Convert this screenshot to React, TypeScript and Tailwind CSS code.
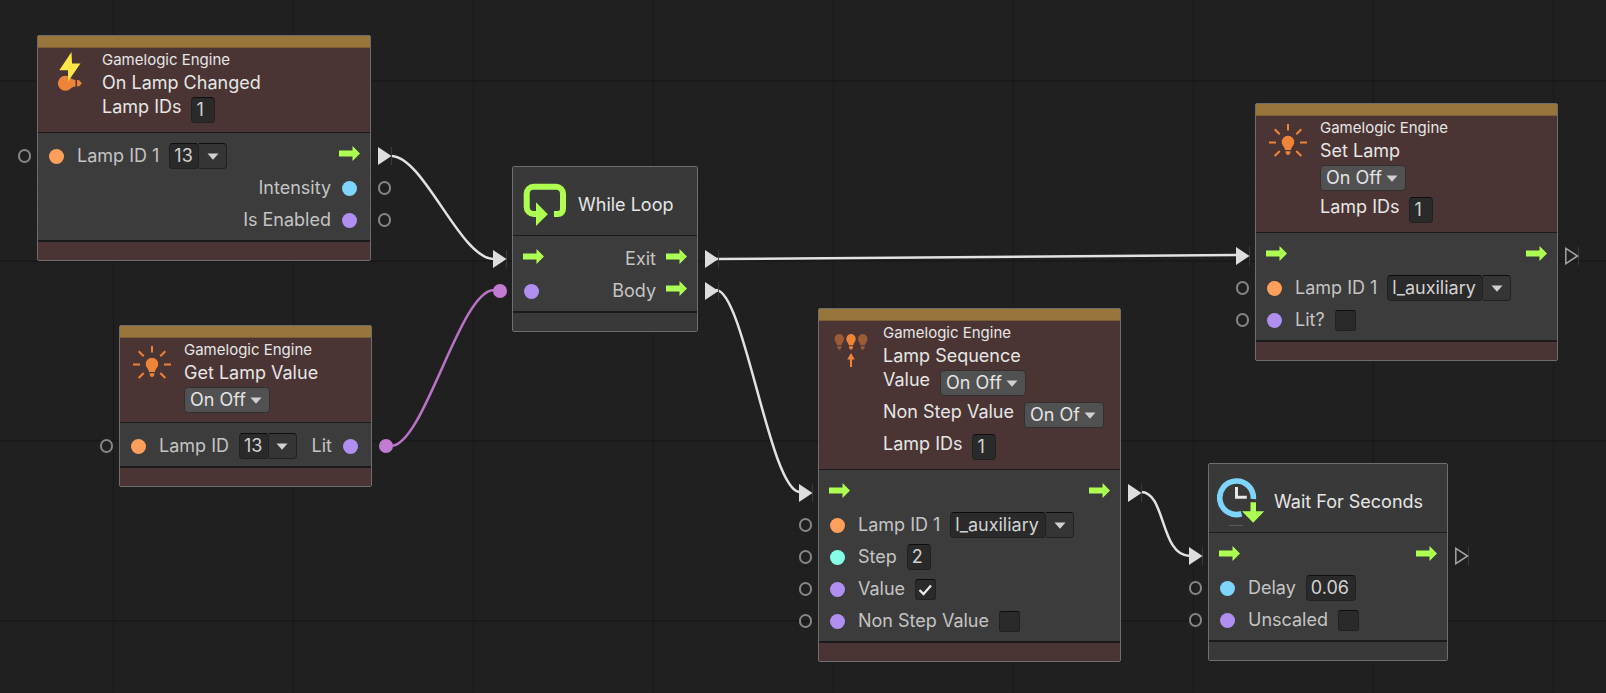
import type { ReactNode } from "react";

type PortKind = "flow" | "flowEmpty" | "empty" | "linked";
type Tone = "orange" | "blue" | "purple" | "teal";

const toneClass: Record<Tone, string> = {
  orange: "bg-[#ff9f5b]",
  blue: "bg-[#7fd4fc]",
  purple: "bg-[#b08ff0]",
  teal: "bg-[#84ffe6]",
};

function Port({ kind, side }: { kind: PortKind; side: "in" | "out" }) {
  const place = side === "in" ? "-left-5" : "-right-[22px]";
  return (
    <span className={`absolute top-0 flex h-full w-3.5 items-center ${place}`}>
      {kind === "flow" && (
        <svg width="14" height="18" viewBox="0 0 14 18">
          <path d="M13.5 0v18" stroke="#3a3a3a" />
          <path d="M0 0 13.5 9 0 18z" fill="#dedede" />
        </svg>
      )}
      {kind === "flowEmpty" && (
        <svg width="14" height="18" viewBox="0 0 14 18">
          <path d="M13.5 0v18" stroke="#3a3a3a" />
          <path d="M.8 1.300 12.500 9 .8 16.700z" fill="none" stroke="#a4a4a4" strokeWidth="1.500" />
        </svg>
      )}
      {kind === "empty" && <span className="h-3.5 w-[13px] rounded-full border-2 border-[#868686]" />}
      {kind === "linked" && <span className="size-3.5 rounded-full bg-[#c17bd0]" />}
    </span>
  );
}

function Arrow() {
  return (
    <svg className="mb-1.5" width="21" height="15" viewBox="0 0 21 15">
      <path d="M0 4.5h13.5V0L21 7.5 13.5 15v-4.5H0z" fill="#adff52" />
    </svg>
  );
}

function Dot({ tone, side = "in" }: { tone: Tone; side?: "in" | "out" }) {
  return (
    <span className={`flex w-[19px] ${side === "in" ? "justify-start pl-px" : "justify-end pr-[3px]"}`}>
      <span className={`size-[15px] rounded-full ${toneClass[tone]}`} />
    </span>
  );
}

function Caret() {
  return (
    <svg width="12" height="7" viewBox="0 0 12 7" className="pointer-events-none">
      <path d="M.5.5h11L6 6.7z" fill="#d0d0d0" />
    </svg>
  );
}

const fieldBox =
  "h-[26px] rounded border border-[#212121] border-t-[#0d0d0d] bg-[#2a2a2a] pl-1 text-lg text-[#d2d2d2] outline-none";

function Field({ label, value, width = "w-6" }: { label: string; value: string; width?: string }) {
  return <input aria-label={label} defaultValue={value} className={`${fieldBox} ${width}`} />;
}

function Combo({ label, value, width }: { label: string; value: string; width: string }) {
  return (
    <span className="flex">
      <input aria-label={label} defaultValue={value} className={`${fieldBox} ${width}`} />
      <button
        type="button"
        aria-label={`Choose ${label}`}
        className="flex h-[26px] w-7 items-center justify-center rounded-r border border-l-0 border-[#212121] border-t-[#0d0d0d] bg-[#353535]"
      >
        <Caret />
      </button>
    </span>
  );
}

function Choice({ label, value, width = "w-[86px]" }: { label: string; value: string; width?: string }) {
  return (
    <span className={`relative flex h-[26px] items-center ${width}`}>
      <select
        aria-label={label}
        className="h-full w-full appearance-none rounded border border-[#303030] bg-[#515151] pr-[22px] pl-[5px] text-lg leading-6 text-[#e4e4e4] outline-none"
      >
        <option>{value}</option>
      </select>
      <span className="pointer-events-none absolute right-2 flex">
        <Caret />
      </span>
    </span>
  );
}

function Check({ label, checked = false }: { label: string; checked?: boolean }) {
  return (
    <span className="relative flex size-[21px]">
      <input
        type="checkbox"
        aria-label={label}
        defaultChecked={checked}
        className="peer size-full appearance-none rounded-[3px] border border-[#212121] border-t-[#0d0d0d] bg-[#2a2a2a]"
      />
      <svg
        className="pointer-events-none absolute inset-0 hidden peer-checked:block"
        width="21"
        height="21"
        viewBox="0 0 21 21"
      >
        <path d="m4.5 11 4 4 7.5-8.5" fill="none" stroke="#e8e8e8" strokeWidth="2.3" />
      </svg>
    </span>
  );
}

function Row({
  inPort,
  outPort,
  left,
  right,
}: {
  inPort?: PortKind;
  outPort?: PortKind;
  left?: ReactNode;
  right?: ReactNode;
}) {
  return (
    <div className="relative flex h-8 items-center justify-between px-2.5 whitespace-nowrap">
      {inPort && <Port kind={inPort} side="in" />}
      <div className="flex items-center gap-2.5">{left}</div>
      <div className="flex items-center gap-2.5">{right}</div>
      {outPort && <Port kind={outPort} side="out" />}
    </div>
  );
}

function HeadRow({ label, children }: { label?: string; children: ReactNode }) {
  return (
    <div className="flex items-start gap-2.5">
      {label && <span className="leading-5">{label}</span>}
      {children}
    </div>
  );
}

function EngineNode({
  place,
  title,
  icon,
  head,
  children,
}: {
  place: string;
  title: string;
  icon: ReactNode;
  head: ReactNode;
  children: ReactNode;
}) {
  return (
    <section className={`absolute rounded-xs border border-[#6e6e6e] bg-[#3c3c3c] ${place}`}>
      <div className="h-3 border-b border-[#7d5e33] bg-[#98753a]" />
      <header className="flex gap-2 border-b border-[#1b1b1b] bg-[#4b3534] pb-[9px] pl-2 text-[#e6e6e6]">
        <div className="w-12 pt-1">{icon}</div>
        <div className="flex flex-col whitespace-nowrap">
          <p className="text-[15px] leading-6">Gamelogic Engine</p>
          <h2 className="leading-[22px]">{title}</h2>
          <div className="flex flex-col gap-1.5 pt-[3px]">{head}</div>
        </div>
      </header>
      <div className="pt-[7px] pb-1">{children}</div>
      <footer className="h-5 border-t-2 border-[#1b1b1b] bg-[#4b3534]" />
    </section>
  );
}

function PlainNode({
  place,
  title,
  icon,
  children,
}: {
  place: string;
  title: string;
  icon: ReactNode;
  children: ReactNode;
}) {
  return (
    <section className={`absolute rounded-xs border border-[#6e6e6e] bg-[#3c3c3c] ${place}`}>
      <header className="flex h-[69px] items-center gap-2 border-b border-[#1b1b1b] bg-[#393939] pt-2 pl-2 text-[#e6e6e6]">
        {icon}
        <h2 className="whitespace-nowrap">{title}</h2>
      </header>
      <div className="pt-[7px] pb-1">{children}</div>
      <footer className="h-5 border-t-2 border-[#1b1b1b] bg-[#393939]" />
    </section>
  );
}

function EventIcon() {
  return (
    <svg width="48" height="48" viewBox="0 0 48 48">
      <circle cx="19.4" cy="31.300" r="7.500" fill="#ee8437" />
      <path d="M22 25c3 1 4 2.700 7.500 3v6.600c-3.500.3-4.500 2-7.500 3zM31 28c3 0 3 1.500 5 3.300-2 1.800-2 3.300-5 3.300z" fill="#ee8437" />
      <path d="M25.500 0 13.300 18.300h8.700V29.500L34.500 11.500H26z" fill="#ffe74a" />
    </svg>
  );
}

function LampIcon() {
  return (
    <svg width="48" height="48" viewBox="0 0 48 48">
      <path
        d="M24 15.800a6.200 6.200 0 0 1 6.200 6.200c0 3.500-2.700 4.500-3.200 8h-6c-.5-3.500-3.200-4.500-3.200-8a6.200 6.200 0 0 1 6.200-6.200zM21.500 31.300h5c0 2-1 3.700-2.500 3.700s-2.500-1.700-2.500-3.700z"
        fill="#ee8437"
      />
      <path
        d="M24 4v6.500M10.700 9.300l5 5M37.300 9.300l-5 5M5 22.500h7M36 22.500h7M10.700 36l5-5M37.300 36l-5-5"
        fill="none"
        stroke="#ee8437"
        strokeWidth="2"
      />
    </svg>
  );
}

const bulb =
  "M0 0a4.700 4.700 0 0 1 4.700 4.700c0 3-2 4-2.500 6.500h-4.400c-.5-2.500-2.500-3.500-2.500-6.500A4.700 4.700 0 0 1 0 0zM-2 12.300h4c0 2-.8 3.400-2 3.400s-2-1.400-2-3.400z";

function SequenceIcon() {
  return (
    <svg width="48" height="48" viewBox="0 0 48 48">
      <path transform="translate(12.300 9)" d={bulb} fill="#9c5a35" />
      <path transform="translate(24 9)" d={bulb} fill="#ee8437" />
      <path transform="translate(35.700 9)" d={bulb} fill="#9c5a35" />
      <path d="m24 28 3.800 6.500H25V42h-2v-7.500h-2.800z" fill="#ee8437" />
    </svg>
  );
}

function LoopIcon() {
  return (
    <svg width="49" height="48" viewBox="0 0 49 48">
      <path
        d="M16 33h-3.300a7 7 0 0 1-7-7V12.700a7 7 0 0 1 7-7H35a7 7 0 0 1 7 7V28a5 5 0 0 1-5 5h-4"
        fill="none"
        stroke="#adff52"
        strokeWidth="6"
      />
      <path d="M15 21.300V45l11.800-11.800z" fill="#adff52" />
    </svg>
  );
}

function TimerIcon() {
  return (
    <svg width="49" height="48" viewBox="0 0 49 48">
      <path d="M36.300 21A16.800 16.800 0 1 0 24.500 35.800" fill="none" stroke="#7fd4fc" strokeWidth="5.600" />
      <path d="M19.500 9v10.300h10.300" fill="none" stroke="#e6e6e6" strokeWidth="3" />
      <path d="M33.500 24.300H39v8.900h8.200L36.200 44.700 25 33.200h8.500z" fill="#adff52" />
      <path d="M12 47.500h14" stroke="#5a5a5a" />
    </svg>
  );
}

function Wires() {
  return (
    <svg className="pointer-events-none absolute top-0 left-0" width="1606" height="693" fill="none" strokeWidth="2.5">
      <g stroke="#e2e2e2">
        <path d="M391 156C424 156 460 259 494 259" />
        <path d="M716 259 1236 255" />
        <path d="M716 290C744 290 770 492 800 492" />
        <path d="M1141 492C1166 492 1160 556 1190 556" />
      </g>
      <path d="M391 446C424 446 460 290 494 290" stroke="#b873c8" />
    </svg>
  );
}

export default function App() {
  return (
    <main className="relative min-h-screen overflow-hidden bg-[#202020] bg-[linear-gradient(to_right,#191919_1px,transparent_1px),linear-gradient(to_bottom,#1a1a1a_2px,transparent_2px),linear-gradient(to_right,#1f1f1f_1px,transparent_1px),linear-gradient(to_bottom,#1e1e1e_1px,transparent_1px)] bg-[size:180px_180px,180px_180px,18px_18px,18px_18px] bg-[position:113px_80px,113px_80px,5px_8px,5px_8px] font-['Inter',sans-serif] text-lg leading-6 text-[#c4c4c4] [font-variation-settings:'opsz'_14]">
      <Wires />

      <EngineNode
        place="left-[37px] top-[35px] w-[334px]"
        title="On Lamp Changed"
        icon={<EventIcon />}
        head={
          <HeadRow label="Lamp IDs">
            <Field label="Lamp IDs" value="1" />
          </HeadRow>
        }
      >
        <Row
          inPort="empty"
          outPort="flow"
          left={
            <>
              <Dot tone="orange" />
              <span>Lamp ID 1</span>
              <Combo label="Lamp ID 1" value="13" width="w-[30px]" />
            </>
          }
          right={<Arrow />}
        />
        <Row
          outPort="empty"
          right={
            <>
              <span>Intensity</span>
              <Dot tone="blue" side="out" />
            </>
          }
        />
        <Row
          outPort="empty"
          right={
            <>
              <span>Is Enabled</span>
              <Dot tone="purple" side="out" />
            </>
          }
        />
      </EngineNode>

      <EngineNode
        place="left-[119px] top-[325px] w-[253px]"
        title="Get Lamp Value"
        icon={<LampIcon />}
        head={
          <HeadRow>
            <Choice label="Value type" value="On Off" />
          </HeadRow>
        }
      >
        <Row
          inPort="empty"
          outPort="linked"
          left={
            <>
              <Dot tone="orange" />
              <span>Lamp ID</span>
              <Combo label="Lamp ID" value="13" width="w-[30px]" />
            </>
          }
          right={
            <>
              <span>Lit</span>
              <Dot tone="purple" side="out" />
            </>
          }
        />
      </EngineNode>

      <PlainNode place="left-[512px] top-[166px] w-[186px]" title="While Loop" icon={<LoopIcon />}>
        <Row
          inPort="flow"
          outPort="flow"
          left={<Arrow />}
          right={
            <>
              <span>Exit</span>
              <Arrow />
            </>
          }
        />
        <Row
          inPort="linked"
          outPort="flow"
          left={<Dot tone="purple" />}
          right={
            <>
              <span>Body</span>
              <Arrow />
            </>
          }
        />
      </PlainNode>

      <EngineNode
        place="left-[818px] top-[308px] w-[303px]"
        title="Lamp Sequence"
        icon={<SequenceIcon />}
        head={
          <>
            <HeadRow label="Value">
              <Choice label="Value" value="On Off" />
            </HeadRow>
            <HeadRow label="Non Step Value">
              <Choice label="Non Step Value" value="On Of" width="w-20" />
            </HeadRow>
            <HeadRow label="Lamp IDs">
              <Field label="Lamp IDs" value="1" />
            </HeadRow>
          </>
        }
      >
        <Row inPort="flow" outPort="flow" left={<Arrow />} right={<Arrow />} />
        <Row
          inPort="empty"
          left={
            <>
              <Dot tone="orange" />
              <span>Lamp ID 1</span>
              <Combo label="Lamp ID 1" value="l_auxiliary" width="w-24" />
            </>
          }
        />
        <Row
          inPort="empty"
          left={
            <>
              <Dot tone="teal" />
              <span>Step</span>
              <Field label="Step" value="2" />
            </>
          }
        />
        <Row
          inPort="empty"
          left={
            <>
              <Dot tone="purple" />
              <span>Value</span>
              <Check label="Value" checked />
            </>
          }
        />
        <Row
          inPort="empty"
          left={
            <>
              <Dot tone="purple" />
              <span>Non Step Value</span>
              <Check label="Non Step Value" />
            </>
          }
        />
      </EngineNode>

      <PlainNode place="left-[1208px] top-[463px] w-[240px]" title="Wait For Seconds" icon={<TimerIcon />}>
        <Row inPort="flow" outPort="flowEmpty" left={<Arrow />} right={<Arrow />} />
        <Row
          inPort="empty"
          left={
            <>
              <Dot tone="blue" />
              <span>Delay</span>
              <Field label="Delay" value="0.06" width="w-[50px]" />
            </>
          }
        />
        <Row
          inPort="empty"
          left={
            <>
              <Dot tone="purple" />
              <span>Unscaled</span>
              <Check label="Unscaled" />
            </>
          }
        />
      </PlainNode>

      <EngineNode
        place="left-[1255px] top-[103px] w-[303px]"
        title="Set Lamp"
        icon={<LampIcon />}
        head={
          <>
            <HeadRow>
              <Choice label="Lamp value type" value="On Off" />
            </HeadRow>
            <HeadRow label="Lamp IDs">
              <Field label="Lamp IDs" value="1" />
            </HeadRow>
          </>
        }
      >
        <Row inPort="flow" outPort="flowEmpty" left={<Arrow />} right={<Arrow />} />
        <Row
          inPort="empty"
          left={
            <>
              <Dot tone="orange" />
              <span>Lamp ID 1</span>
              <Combo label="Lamp ID 1" value="l_auxiliary" width="w-24" />
            </>
          }
        />
        <Row
          inPort="empty"
          left={
            <>
              <Dot tone="purple" />
              <span>Lit?</span>
              <Check label="Lit?" />
            </>
          }
        />
      </EngineNode>
    </main>
  );
}
